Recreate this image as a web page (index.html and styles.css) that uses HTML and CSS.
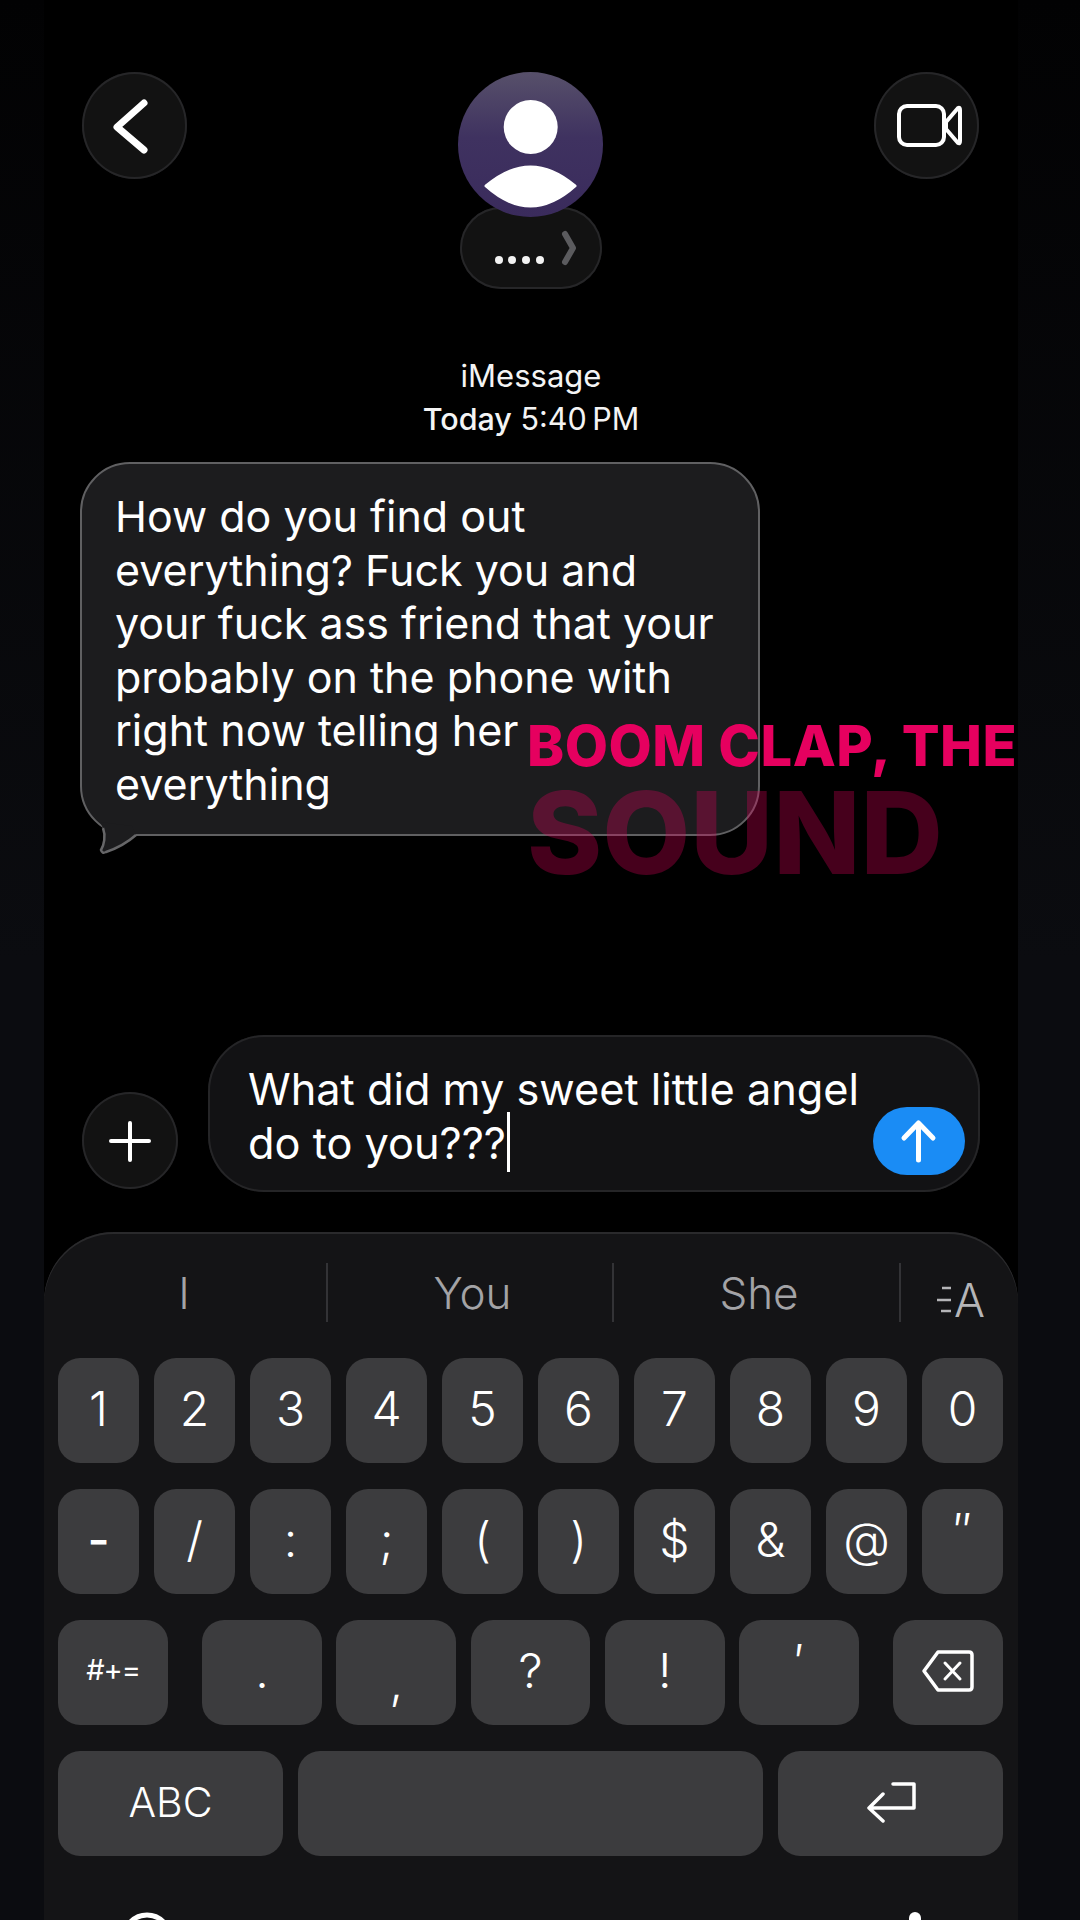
FILE: index.html
```html
<!DOCTYPE html>
<html lang="en">
  <head>
    <meta charset="UTF-8" />
    <meta name="viewport" content="width=device-width, initial-scale=1.0" />
    <title>iMessage</title>
    <link rel="stylesheet" href="styles.css">
  </head>
  <body>
    <div class="screen">
      <header class="topbar">
        <button class="round-btn">
          <svg width="105" height="107" viewBox="82 72 105 107"><path class="line" stroke-width="7" d="M144 103 L117 127 L144 150" /></svg>
        </button>
        <div class="contact">
          <div class="avatar">
            <svg width="145" height="145" viewBox="0 0 145 145">
              <circle cx="72.7" cy="55" r="27" fill="#fff" />
              <path fill="#fff" stroke="#fff" stroke-width="3" stroke-linejoin="round" d="M28 114 Q72.5 76 117 114 Q72.5 154 28 114 Z" />
            </svg>
          </div>
          <div class="name-pill">
            <svg width="142" height="82" viewBox="460 208 142 82">
              <circle class="dot" cx="499" cy="261" r="4" />
              <circle class="dot" cx="512" cy="261" r="4" />
              <circle class="dot" cx="526" cy="261" r="4" />
              <circle class="dot" cx="540" cy="261" r="4" />
              <path d="M565 235 L573 249 L565 263" fill="none" stroke="#5b5b5e" stroke-width="6" stroke-linecap="round" stroke-linejoin="round" />
            </svg>
          </div>
        </div>
        <button class="round-btn">
          <svg width="105" height="107" viewBox="874 72 105 107">
            <rect class="line" x="899" y="106" width="45" height="39" rx="8" stroke-width="4" />
            <path class="line" stroke-width="4" d="M946 122 L958 108 Q960 107 960 110 L960 141 Q960 144 958 143 L946 129 Z" />
          </svg>
        </button>
      </header>

      <div class="status">
        <div class="status-service">iMessage</div>
        <div><b>Today</b> 5:40&#8201;PM</div>
      </div>

      <div class="thread">
        <div class="bubble">
          How do you find out<br>
          everything? Fuck you and<br>
          your fuck ass friend that your<br>
          probably on the phone with<br>
          right now telling her<br>
          everything
          <svg class="tail" width="66" height="76" viewBox="78 780 66 76">
            <path fill="#1c1c1e" d="M100 822 L103 828 C106 836 104 845 101 850 Q102 854 106 852 C118 848 128 842 136 835 L132 826 Z" />
            <path fill="none" stroke="#666668" stroke-width="2.500" d="M103 828 C106 836 104 845 101 850 Q102 854 106 852 C118 848 128 842 136 835" />
          </svg>
        </div>
        <div class="caption">
          <div class="caption-top">BOOM CLAP, THE</div>
          <div class="caption-fade">SOUND</div>
        </div>
      </div>

      <div class="composer">
        <button class="plus-btn">
          <svg width="96" height="97" viewBox="82 1092 96 97"><path class="line" stroke-width="4" d="M130 1123 V1160 M111 1141 H149" /></svg>
        </button>
        <div class="input">
          <div class="input-text">What did my sweet little angel<br>do to you???<span class="caret"></span></div>
          <button class="send-btn">
            <svg width="92" height="68" viewBox="873 1107 92 68"><path class="line" stroke-width="5" d="M918.500 1160 V1124 M904 1138 L918.500 1123 L933 1138" /></svg>
          </button>
        </div>
      </div>

      <div class="keyboard">
        <div class="suggestions">
          <div class="suggestion suggestion-first">I</div>
          <div class="suggestion suggestion-word">You</div>
          <div class="suggestion suggestion-word">She</div>
          <div class="suggestion format">
            <svg width="16" height="28" viewBox="0 0 16 28"><path fill="none" stroke="#b5b5b8" stroke-width="2.500" d="M6 2 H15 M1 14 H15 M5 25 H15" /></svg>
            <span>A</span>
          </div>
        </div>

        <div class="key-row">
          <div class="key">1</div><div class="key">2</div><div class="key">3</div><div class="key">4</div><div class="key">5</div>
          <div class="key">6</div><div class="key">7</div><div class="key">8</div><div class="key">9</div><div class="key">0</div>
        </div>
        <div class="key-row">
          <div class="key key-bold">-</div><div class="key">/</div><div class="key">:</div><div class="key">;</div><div class="key">(</div>
          <div class="key">)</div><div class="key">$</div><div class="key">&amp;</div><div class="key">@</div><div class="key key-prime">&#8243;</div>
        </div>
        <div class="key-row row-punct">
          <div class="key key-side key-small">#+=</div>
          <div class="punct">
            <div class="key">.</div><div class="key key-low">,</div><div class="key">?</div><div class="key">!</div><div class="key key-prime">&#8242;</div>
          </div>
          <div class="key key-side">
            <svg width="54" height="44" viewBox="0 0 54 44">
              <path class="line" stroke-width="3.500" d="M17 3 H48 Q51 3 51 6 V38 Q51 41 48 41 H17 L3 22 Z" />
              <path class="line" stroke-width="3" d="M24 14 L39 30 M39 14 L24 30" />
            </svg>
          </div>
        </div>
        <div class="key-row row-bottom">
          <div class="key key-abc">ABC</div>
          <div class="key key-space"></div>
          <div class="key key-abc">
            <svg width="50" height="42" viewBox="0 0 50 42">
              <path class="line" stroke-width="3.500" d="M27 3 H48 V27 H3 M17 13 L3 27 L17 40" />
            </svg>
          </div>
        </div>

        <div class="kb-bottom">
          <svg width="52" height="52" viewBox="0 0 52 52"><circle class="line" cx="26" cy="26" r="23" stroke-width="5" /></svg>
          <svg width="22" height="40" viewBox="0 0 22 40"><rect x="5" y="0" width="12" height="30" rx="6" fill="#fff" /></svg>
        </div>
      </div>
    </div>
  </body>
</html>
```

FILE: styles.css
```css
* {
  box-sizing: border-box;
}
html,
body {
  margin: 0;
  height: 1920px;
  overflow: hidden;
  background: linear-gradient(#020203, #0b0c10 50%);
}
body {
  font-family: Inter, "Liberation Sans", Arial, sans-serif;
  color: #fff;
}
button {
  padding: 0;
  border: none;
  background: none;
  color: inherit;
}
svg {
  display: block;
}
.line {
  fill: none;
  stroke: #fff;
  stroke-linecap: round;
  stroke-linejoin: round;
}
.dot {
  fill: #f2f2f2;
}

.screen {
  width: 974px;
  height: 1920px;
  margin-left: 44px;
  background: #000;
}

.topbar {
  display: flex;
  justify-content: space-between;
  align-items: flex-start;
  padding: 72px 39px 0 38px;
}
.round-btn {
  width: 105px;
  height: 107px;
  border-radius: 50%;
  background: #121212;
  box-shadow: inset 0 0 0 2px #262628;
}
.contact {
  display: flex;
  flex-direction: column;
  align-items: center;
}
.avatar {
  position: relative;
  z-index: 1;
  width: 145px;
  height: 145px;
  border-radius: 50%;
  background: linear-gradient(#57506a, #3f3260 45%, #3a2b5c);
}
.name-pill {
  width: 142px;
  height: 82px;
  margin-top: -10px;
  border-radius: 41px;
  background: #121212;
  box-shadow: inset 0 0 0 2px #262628;
}

.status {
  margin-top: 65px;
  text-align: center;
  font-size: 30.500px;
  line-height: 43px;
  color: #f4f4f4;
}
.status-service {
  font-size: 31px;
}
.status b {
  font-weight: 500;
}

.thread {
  position: relative;
  height: 595px;
  padding: 22px 0 0 36px;
}
.bubble {
  position: relative;
  width: 680px;
  height: 374px;
  padding: 26px 0 0 33px;
  border: 2px solid #606062;
  border-radius: 50px;
  background: #1c1c1e;
  font-size: 43px;
  line-height: 53.500px;
}
.tail {
  position: absolute;
  left: -4px;
  top: 316px;
}
.caption {
  position: absolute;
  left: 483px;
  top: 276px;
  font-weight: 800;
  white-space: nowrap;
}
.caption-top {
  font-size: 56px;
  line-height: 60px;
  letter-spacing: 0.500px;
  color: #e6005f;
}
.caption-fade {
  margin-top: 1px;
  font-size: 114px;
  line-height: 112px;
  color: #e6005f;
  opacity: 0.3;
}

.composer {
  display: flex;
  align-items: flex-end;
  gap: 30px;
  padding-left: 38px;
}
.plus-btn {
  width: 96px;
  height: 97px;
  margin-bottom: 3px;
  border-radius: 50%;
  background: #121212;
  box-shadow: inset 0 0 0 2px #262628;
}
.input {
  display: flex;
  justify-content: space-between;
  align-items: flex-end;
  width: 772px;
  height: 157px;
  padding: 17px 15px 17px 40px;
  border-radius: 56px;
  background: #121214;
  box-shadow: inset 0 0 0 2px #252527;
}
.input-text {
  margin-bottom: 5px;
  font-size: 43.300px;
  line-height: 53.500px;
  white-space: nowrap;
}
.caret {
  display: inline-block;
  width: 3px;
  height: 60px;
  margin: -8px 0 -13px 1px;
  background: #fff;
}
.send-btn {
  width: 92px;
  height: 68px;
  border-radius: 34px;
  background: #1a8cf5;
}

.keyboard {
  height: 688px;
  margin-top: 40px;
  padding: 0 15px 0 14px;
  border-radius: 70px 70px 0 0;
  background: #141416;
  box-shadow: inset 0 2px 0 #2a2a2c;
}
.suggestions {
  display: grid;
  grid-template-columns: 270px 286px 287px 1fr;
  height: 126px;
  padding-top: 31px;
  margin-right: -15px;
}
.suggestion {
  display: flex;
  justify-content: center;
  align-items: center;
  height: 59px;
  border-right: 2px solid #333336;
  font-size: 44px;
  font-weight: 300;
  color: #a3a3a6;
}
.suggestion-first {
  padding-right: 16px;
}
.suggestion-word {
  padding-left: 5px;
}
.format {
  gap: 2px;
  justify-content: flex-start;
  padding: 14px 0 0 35px;
  border-right: none;
  font-size: 46px;
  color: #b5b5b8;
}

.key-row {
  display: grid;
  grid-template-columns: repeat(10, 81px);
  justify-content: space-between;
  height: 104.500px;
  margin-bottom: 26.500px;
}
.key {
  display: flex;
  justify-content: center;
  align-items: center;
  padding-bottom: 3px;
  border-radius: 22px;
  background: #3c3c3e;
  font-size: 48px;
  font-weight: 350;
}
.key-bold {
  font-weight: 500;
}
.key-low {
  padding: 18px 0 0;
}
.key-prime {
  padding-bottom: 22px;
}
.row-punct {
  grid-template-columns: 110px 1fr 110px;
  gap: 34px;
}
.punct {
  display: grid;
  grid-template-columns: repeat(5, 1fr);
  gap: 14.500px;
}
.key-small {
  padding-bottom: 6px;
  font-size: 29px;
  font-weight: 400;
  letter-spacing: -1px;
}
.row-bottom {
  grid-template-columns: 225px 1fr 225px;
  gap: 15px;
}
.key-abc {
  font-size: 41px;
}

.kb-bottom {
  display: flex;
  justify-content: space-between;
  align-items: flex-start;
  padding: 30px 77px 0 63px;
}
```
